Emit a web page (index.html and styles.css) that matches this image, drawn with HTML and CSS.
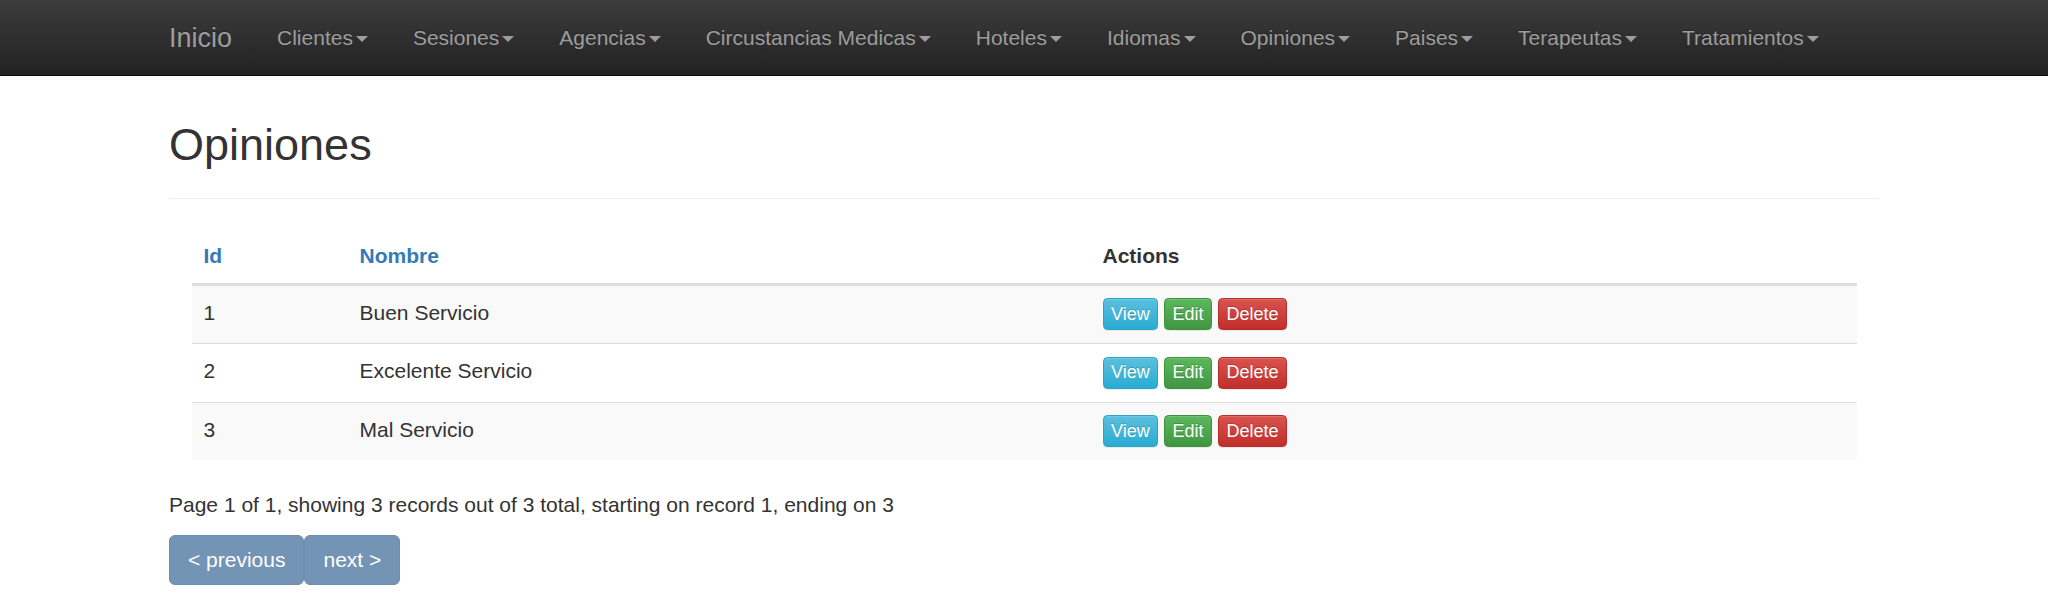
FILE: index.html
```html
<!DOCTYPE html>
<html lang="es">
<head>
<meta charset="utf-8">
<title>Opiniones</title>
<link rel="stylesheet" href="styles.css">
</head>
<body>
<nav class="navbar">
  <div class="container nav-inner">
    <a class="brand" href="#">Inicio</a>
    <ul class="nav">
      <li><a href="#">Clientes<span class="caret"></span></a></li>
      <li><a href="#">Sesiones<span class="caret"></span></a></li>
      <li><a href="#">Agencias<span class="caret"></span></a></li>
      <li><a href="#">Circustancias Medicas<span class="caret"></span></a></li>
      <li><a href="#">Hoteles<span class="caret"></span></a></li>
      <li><a href="#">Idiomas<span class="caret"></span></a></li>
      <li><a href="#">Opiniones<span class="caret"></span></a></li>
      <li><a href="#">Paises<span class="caret"></span></a></li>
      <li><a href="#">Terapeutas<span class="caret"></span></a></li>
      <li><a href="#">Tratamientos<span class="caret"></span></a></li>
    </ul>
  </div>
</nav>
<main class="container">
  <div class="page-header"><h2>Opiniones</h2></div>
  <div class="table-wrap">
    <table class="table">
      <thead>
        <tr>
          <th class="col-id"><a href="#">Id</a></th>
          <th class="col-name"><a href="#">Nombre</a></th>
          <th>Actions</th>
        </tr>
      </thead>
      <tbody>
        <tr class="odd">
          <td>1</td>
          <td>Buen Servicio</td>
          <td><a class="btn btn-info" href="#">View</a> <a class="btn btn-success" href="#">Edit</a> <a class="btn btn-danger" href="#">Delete</a></td>
        </tr>
        <tr>
          <td>2</td>
          <td>Excelente Servicio</td>
          <td><a class="btn btn-info" href="#">View</a> <a class="btn btn-success" href="#">Edit</a> <a class="btn btn-danger" href="#">Delete</a></td>
        </tr>
        <tr class="odd">
          <td>3</td>
          <td>Mal Servicio</td>
          <td><a class="btn btn-info" href="#">View</a> <a class="btn btn-success" href="#">Edit</a> <a class="btn btn-danger" href="#">Delete</a></td>
        </tr>
      </tbody>
    </table>
  </div>
  <p class="counter">Page 1 of 1, showing 3 records out of 3 total, starting on record 1, ending on 3</p>
  <div class="pager">
    <a class="page-btn" href="#">&lt; previous</a><a class="page-btn" href="#">next &gt;</a>
  </div>
</main>
</body>
</html>
```
FILE: styles.css
```css
* { box-sizing: border-box; }
html, body { margin: 0; padding: 0; }
body {
  font-family: "Liberation Sans", Arial, Helvetica, sans-serif;
  font-size: 21px;
  line-height: 30px;
  color: #333;
  background: #fff;
}
a { text-decoration: none; }

.container {
  width: 1755px;
  margin: 0 auto;
  padding: 0 22.5px;
}

/* navbar */
.navbar {
  background-image: linear-gradient(to bottom, #3c3c3c 0, #222 100%);
  border-bottom: 1px solid #080808;
  height: 76px;
}
.nav-inner {
  display: flex;
  align-items: flex-start;
}
.brand {
  display: block;
  margin-left: -22.5px;
  padding: 22.5px;
  height: 75px;
  font-size: 27px;
  line-height: 30px;
  color: #9d9d9d;
  text-shadow: 0 -1px 0 rgba(0,0,0,.25);
}
.nav {
  display: flex;
  list-style: none;
  margin: 0;
  padding: 0;
}
.nav a {
  display: block;
  padding: 22.5px;
  line-height: 30px;
  color: #9d9d9d;
  text-shadow: 0 -1px 0 rgba(0,0,0,.25);
}
.caret {
  display: inline-block;
  width: 0;
  height: 0;
  margin-left: 3px;
  vertical-align: middle;
  border-top: 6px solid #9d9d9d;
  border-left: 6px solid transparent;
  border-right: 6px solid transparent;
}

/* header */
.page-header {
  margin: 44px 0 30px;
  padding-bottom: 28.5px;
  border-bottom: 1.5px solid #eee;
}
.page-header h2 {
  margin: 0;
  font-size: 45px;
  line-height: 1.1;
  font-weight: 400;
}

/* table */
.table-wrap { margin: 0 22.5px; }
.table {
  width: 100%;
  border-collapse: collapse;
  border-spacing: 0;
  margin-bottom: 30px;
}
.table th {
  text-align: left;
  padding: 12px;
  line-height: 30px;
  font-weight: 700;
  vertical-align: bottom;
  border-bottom: 3px solid #ddd;
}
.table th a { color: #337ab7; }
.table .col-id { width: 156px; }
.table .col-name { width: 743px; }
.table td {
  padding: 12px 12px 13px;
  line-height: 30px;
  vertical-align: top;
  border-top: 1.5px solid #ddd;
}
.table tr.odd td { background: #f9f9f9; }

/* buttons */
.btn {
  display: inline-block;
  padding: 1.5px 7.5px;
  font-size: 18px;
  line-height: 27px;
  border: 1.5px solid transparent;
  border-radius: 4.5px;
  color: #fff;
  text-shadow: 0 -1px 0 rgba(0,0,0,.2);
  box-shadow: inset 0 1px 0 rgba(255,255,255,.15), 0 1px 1px rgba(0,0,0,.075);
  vertical-align: middle;
}
.btn-info {
  background-image: linear-gradient(to bottom, #5bc0de 0, #2aabd2 100%);
  border-color: #28a4c9;
}
.btn-success {
  background-image: linear-gradient(to bottom, #5cb85c 0, #419641 100%);
  border-color: #3e8f3e;
}
.btn-danger {
  background-image: linear-gradient(to bottom, #d9534f 0, #c12e2a 100%);
  border-color: #b92c28;
}

/* pager */
.counter { margin: 0 0 15px; }
.pager { display: flex; }
.page-btn {
  display: block;
  padding: 9px 18px;
  line-height: 30px;
  font-size: 21px;
  color: #fff;
  background: #7394b4;
  border: 1.5px solid #6d8eae;
  border-radius: 6px;
}
```
